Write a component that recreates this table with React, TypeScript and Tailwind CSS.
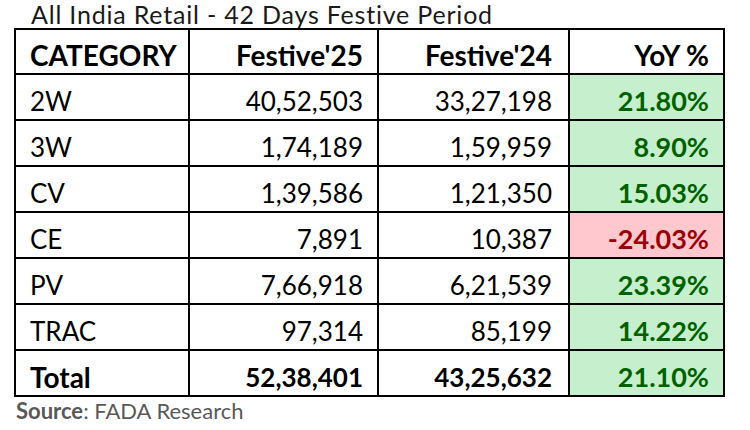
import React from 'react';

type Row = {
  cat: string;
  f25: string;
  f24: string;
  yoy: string;
  down?: boolean;
  total?: boolean;
};

const rows: Row[] = [
  { cat: '2W', f25: '40,52,503', f24: '33,27,198', yoy: '21.80%' },
  { cat: '3W', f25: '1,74,189', f24: '1,59,959', yoy: '8.90%' },
  { cat: 'CV', f25: '1,39,586', f24: '1,21,350', yoy: '15.03%' },
  { cat: 'CE', f25: '7,891', f24: '10,387', yoy: '-24.03%', down: true },
  { cat: 'PV', f25: '7,66,918', f24: '6,21,539', yoy: '23.39%' },
  { cat: 'TRAC', f25: '97,314', f24: '85,199', yoy: '14.22%' },
  { cat: 'Total', f25: '52,38,401', f24: '43,25,632', yoy: '21.10%', total: true },
];

const cell = 'border-2 border-black align-bottom leading-[30px] pb-[3px]';

export default function App() {
  return (
    <div className="w-[750px] h-[430px] bg-white font-['Lato',sans-serif] text-black overflow-hidden">
      <div className="pl-[31px] pt-[1px] text-[25px] leading-[26px] tracking-[0.8px] text-[#1a1a1a]">
        All India Retail - 42 Days Festive Period
      </div>
      <table className="ml-[14px] mt-[1px] border-collapse table-fixed w-[709px]">
        <colgroup>
          <col className="w-[174px]" />
          <col className="w-[189px]" />
          <col className="w-[191px]" />
          <col className="w-[155px]" />
        </colgroup>
        <thead>
          <tr className="h-[45px] text-[28px] font-bold">
            <th className={`${cell} text-left pl-[14px]`}>CATEGORY</th>
            <th className={`${cell} text-right pr-[14px]`}>Festive'25</th>
            <th className={`${cell} text-right pr-[16px]`}>Festive'24</th>
            <th className={`${cell} text-right pr-[14px]`}>YoY %</th>
          </tr>
        </thead>
        <tbody>
          {rows.map(r => (
            <tr key={r.cat} className={`h-[46px] text-[26px] ${r.total ? 'font-bold' : ''}`}>
              <td className={`${cell} text-left pl-[14px] ${r.total ? 'text-[28px]' : ''}`}>{r.cat}</td>
              <td className={`${cell} text-right pr-[14px]`}>{r.f25}</td>
              <td className={`${cell} text-right pr-[16px]`}>{r.f24}</td>
              <td
                className={`${cell} text-right pr-[14px] font-bold text-[27px] ${
                  r.down ? 'bg-[#ffc7ce] text-[#9c0006]' : 'bg-[#c6efce] text-[#006100]'
                }`}
              >
                {r.yoy}
              </td>
            </tr>
          ))}
        </tbody>
      </table>
      <div className="pl-[16px] pt-[1px] text-[22px] leading-[26px] text-[#595959]">
        <span className="font-bold">Source</span>: FADA Research
      </div>
    </div>
  );
}
